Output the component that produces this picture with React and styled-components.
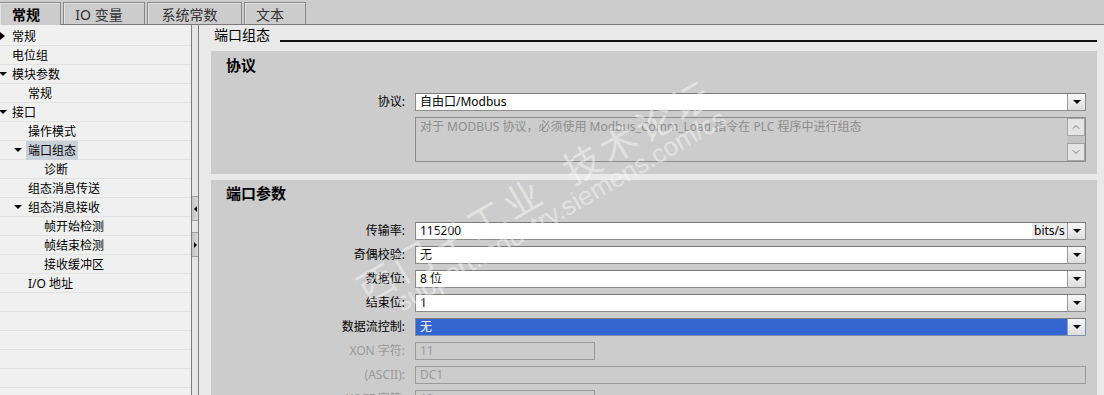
import React from "react";
import styled, { createGlobalStyle } from "styled-components";
import { ChevronUp, ChevronDown } from "lucide-react";

const GlobalStyle = createGlobalStyle`
  html, body { margin: 0; padding: 0; }
  body {
    font-family: "Noto Sans", "Noto Sans CJK SC", sans-serif;
    font-size: 12px;
    color: #000;
    background: #e9e9e9;
  }
`;

const Screen = styled.div`
  position: relative;
  width: 1104px;
  height: 395px;
  overflow: hidden;
  display: flex;
  flex-direction: column;
  background: #e9e9e9;
`;

/* ---------- tabs ---------- */
const TabBar = styled.div`
  height: 25px;
  box-sizing: border-box;
  background: #cccccc;
  border-bottom: 1px solid #7a7a7a;
  display: flex;
  align-items: flex-end;
  gap: 2px;
  flex-shrink: 0;
`;

const Tab = styled.div`
  box-sizing: border-box;
  width: ${(p) => p.$w}px;
  border: 1px solid #8a8a8a;
  border-bottom: none;
  border-left: ${(p) => (p.$first ? "none" : "1px solid #8a8a8a")};
  box-shadow: inset 1px 0 0 #e2e2e2, inset 0 1px 0 #e2e2e2;
  display: flex;
  align-items: center;
  justify-content: center;
  padding-right: ${(p) => (p.$first ? 8 : 10)}px;
  font-size: 14px;
  font-weight: ${(p) => (p.$active ? 700 : 400)};
  color: ${(p) => (p.$active ? "#000" : "#333")};
  margin-bottom: ${(p) => (p.$active ? "-1px" : "0")};
  height: ${(p) => (p.$active ? "23px" : "22px")};
  background: #cccccc;
`;

/* ---------- body ---------- */
const Body = styled.div`
  flex: 1;
  display: flex;
  min-height: 0;
`;

const Sidebar = styled.div`
  width: 191px;
  flex-shrink: 0;
  background: #f0f0f0;
  padding-top: 2px;
  box-sizing: border-box;
`;

const TreeRow = styled.div`
  height: 19px;
  box-sizing: border-box;
  border-bottom: 1px solid #e2e2e2;
  display: flex;
  align-items: center;
  padding-left: ${(p) => (p.$level === 0 ? 0 : p.$level === 1 ? 14 : 30)}px;
  font-size: 12px;
  white-space: nowrap;
`;

const ArrowSlot = styled.div`
  width: ${(p) => (p.$level === 0 ? 12 : 14)}px;
  height: 19px;
  display: flex;
  align-items: center;
  flex-shrink: 0;
`;

const TriRight = styled.span`
  width: 0;
  height: 0;
  border-top: 4px solid transparent;
  border-bottom: 4px solid transparent;
  border-left: 5px solid #000;
`;

const TriDown = styled.span`
  width: 0;
  height: 0;
  border-left: 4px solid transparent;
  border-right: 4px solid transparent;
  border-top: 4px solid #000;
  margin-left: ${(p) => p.$offset || 0}px;
`;

const TreeLabel = styled.span`
  height: 19px;
  line-height: 19px;
  padding: 0 2px;
  margin-left: -2px;
  background: ${(p) => (p.$selected ? "#c8d0da" : "transparent")};
`;

const Splitter = styled.div`
  width: 8px;
  flex-shrink: 0;
  box-sizing: border-box;
  border-left: 1px solid #7c7c7c;
  border-right: 1px solid #7c7c7c;
  background: #e6e6e6;
  display: flex;
  flex-direction: column;
  padding-top: 171px;
  gap: 11px;
`;

const SplitButton = styled.div`
  height: 23px;
  border-top: 1px solid #a0a0a0;
  border-bottom: 1px solid #a0a0a0;
  background: linear-gradient(90deg, #c4c4c4, #dadada);
  display: flex;
  align-items: center;
  justify-content: center;
`;

const SmallTri = styled.span`
  width: 0;
  height: 0;
  border-top: 3px solid transparent;
  border-bottom: 3px solid transparent;
  ${(p) =>
    p.$dir === "left"
      ? "border-right: 3px solid #000;"
      : "border-left: 3px solid #000;"}
`;

const Main = styled.div`
  flex: 1;
  background: #e9e9e9;
  padding: 0 7px 0 12px;
  display: flex;
  flex-direction: column;
  min-height: 0;
`;

const PageHeader = styled.div`
  height: 26px;
  flex-shrink: 0;
  display: flex;
  align-items: flex-start;
  padding: 2px 0 0 3px;
  box-sizing: border-box;
`;

const PageTitle = styled.span`
  font-size: 14px;
  line-height: 16px;
`;

const Rule = styled.div`
  flex: 1;
  height: 13px;
  border-bottom: 2px solid #111;
  margin-left: 10px;
`;

const Section = styled.div`
  flex-shrink: 0;
  background: #cccccc;
  padding: ${(p) => p.$pad};
  margin-bottom: 6px;
`;

const SectionTitle = styled.div`
  font-size: 15px;
  font-weight: 700;
  height: 20px;
  line-height: 20px;
  padding-left: 15px;
`;

const Form = styled.div`
  display: grid;
  grid-template-columns: 194px 1fr;
  column-gap: 10px;
  row-gap: 6px;
  padding-right: 11px;
  margin-top: ${(p) => p.$top}px;
`;

const Label = styled.div`
  text-align: right;
  font-size: 12px;
  line-height: 18px;
  height: 18px;
  color: ${(p) => (p.$disabled ? "#9a9a9a" : "#000")};
  white-space: nowrap;
`;

const Field = styled.div`
  height: 18px;
  box-sizing: border-box;
  width: ${(p) => (p.$short ? "180px" : "auto")};
  border: 1px solid ${(p) => (p.$active ? "#7f8fb0" : p.$disabled ? "#9a9a9a" : "#8c8c8c")};
  border-top-color: ${(p) => (p.$disabled ? "#9a9a9a" : "#7a7a7a")};
  background: ${(p) => (p.$active ? "#3366d0" : p.$disabled ? "transparent" : "#fff")};
  color: ${(p) => (p.$active ? "#fff" : p.$disabled ? "#9a9a9a" : "#000")};
  display: flex;
  align-items: stretch;
`;

const FieldText = styled.div`
  flex: 1;
  padding-left: 4px;
  font-size: 12px;
  line-height: 16px;
  white-space: nowrap;
  overflow: hidden;
`;

const Unit = styled.div`
  width: 35px;
  background: #ececec;
  font-size: 12px;
  line-height: 16px;
  padding-left: 2px;
  box-sizing: border-box;
`;

const DropButton = styled.div`
  width: 17px;
  flex-shrink: 0;
  border-left: 1px solid #9a9a9a;
  background: linear-gradient(#f8f8f8, #dedede);
  display: flex;
  align-items: center;
  justify-content: center;
`;

const DescBox = styled.div`
  grid-column: 2;
  height: 45px;
  box-sizing: border-box;
  border: 1px solid #8c8c8c;
  display: flex;
`;

const DescText = styled.div`
  flex: 1;
  color: #8e8e8e;
  font-size: 12px;
  padding: 1px 0 0 4px;
  line-height: 16px;
`;

const ScrollCol = styled.div`
  width: 18px;
  display: flex;
  flex-direction: column;
  justify-content: space-between;
  background: #c4c4c4;
`;

const ScrollButton = styled.div`
  height: 18px;
  box-sizing: border-box;
  border: 1px solid #a4a4a4;
  background: #e4e4e4;
  display: flex;
  align-items: center;
  justify-content: center;
  color: #7a7a7a;
`;

const Watermark = styled.div`
  position: absolute;
  left: 372px;
  top: 312px;
  transform: rotate(-30deg);
  transform-origin: 0 0;
  pointer-events: none;
  color: rgba(255, 255, 255, 0.45);
  white-space: nowrap;
  font-family: "Noto Sans CJK SC", sans-serif;
`;

const MarkBig = styled.div`
  font-size: 37px;
  letter-spacing: 5px;
  word-spacing: 14px;
  line-height: 42px;
  margin-top: -46px;
`;

const MarkSmall = styled.div`
  font-family: "Liberation Sans", sans-serif;
  font-size: 26px;
  line-height: 28px;
  margin-top: -4px;
  margin-left: 26px;
`;

const tabs = [
  { label: "常规", w: 61, active: true, first: true },
  { label: "IO 变量", w: 82 },
  { label: "系统常数", w: 95 },
  { label: "文本", w: 62 },
];

const tree = [
  { label: "常规", level: 0, arrow: "right" },
  { label: "电位组", level: 0 },
  { label: "模块参数", level: 0, arrow: "down" },
  { label: "常规", level: 1 },
  { label: "接口", level: 0, arrow: "down" },
  { label: "操作模式", level: 1 },
  { label: "端口组态", level: 1, arrow: "down", selected: true },
  { label: "诊断", level: 2 },
  { label: "组态消息传送", level: 1 },
  { label: "组态消息接收", level: 1, arrow: "down" },
  { label: "帧开始检测", level: 2 },
  { label: "帧结束检测", level: 2 },
  { label: "接收缓冲区", level: 2 },
  { label: "I/O 地址", level: 1 },
  { label: "", level: 0 },
  { label: "", level: 0 },
  { label: "", level: 0 },
  { label: "", level: 0 },
  { label: "", level: 0 },
];

const params = [
  { label: "传输率:", value: "115200", unit: "bits/s", drop: true },
  { label: "奇偶校验:", value: "无", drop: true },
  { label: "数据位:", value: "8 位", drop: true },
  { label: "结束位:", value: "1", drop: true },
  { label: "数据流控制:", value: "无", drop: true, active: true },
  { label: "XON 字符:", value: "11", disabled: true, short: true },
  { label: "(ASCII):", value: "DC1", disabled: true },
  { label: "XOFF 字符:", value: "13", disabled: true, short: true },
];

const Drop = () => (
  <DropButton>
    <TriDown />
  </DropButton>
);

const App = () => {
  return (
    <Screen>
      <GlobalStyle />
      <TabBar>
        {tabs.map((t) => (
          <Tab key={t.label} $w={t.w} $active={t.active} $first={t.first}>
            {t.label}
          </Tab>
        ))}
      </TabBar>
      <Body>
        <Sidebar>
          {tree.map((n, i) => (
            <TreeRow key={i} $level={n.level}>
              <ArrowSlot $level={n.level}>
                {n.arrow === "right" && <TriRight />}
                {n.arrow === "down" && <TriDown $offset={n.level === 0 ? -1 : 0} />}
              </ArrowSlot>
              {n.label && <TreeLabel $selected={n.selected}>{n.label}</TreeLabel>}
            </TreeRow>
          ))}
        </Sidebar>
        <Splitter>
          <SplitButton>
            <SmallTri $dir="left" />
          </SplitButton>
          <SplitButton>
            <SmallTri $dir="right" />
          </SplitButton>
        </Splitter>
        <Main>
          <PageHeader>
            <PageTitle>端口组态</PageTitle>
            <Rule />
          </PageHeader>
          <Section $pad="4px 0 12px 0">
            <SectionTitle>协议</SectionTitle>
            <Form $top={18}>
              <Label>协议:</Label>
              <Field>
                <FieldText>自由口/Modbus</FieldText>
                <Drop />
              </Field>
              <DescBox>
                <DescText>
                  对于 MODBUS 协议，必须使用 Modbus_Comm_Load 指令在 PLC 程序中进行组态
                </DescText>
                <ScrollCol>
                  <ScrollButton>
                    <ChevronUp size={12} strokeWidth={2} />
                  </ScrollButton>
                  <ScrollButton>
                    <ChevronDown size={12} strokeWidth={2} />
                  </ScrollButton>
                </ScrollCol>
              </DescBox>
            </Form>
          </Section>
          <Section $pad="3px 0 40px 0">
            <SectionTitle>端口参数</SectionTitle>
            <Form $top={19}>
              {params.map((p) => (
                <React.Fragment key={p.label}>
                  <Label $disabled={p.disabled}>{p.label}</Label>
                  <Field $active={p.active} $disabled={p.disabled} $short={p.short}>
                    <FieldText>{p.value}</FieldText>
                    {p.unit && <Unit>{p.unit}</Unit>}
                    {p.drop && <Drop />}
                  </Field>
                </React.Fragment>
              ))}
            </Form>
          </Section>
        </Main>
      </Body>
      <Watermark>
        <MarkBig>西门子工业 技术论坛</MarkBig>
        <MarkSmall>support.industry.siemens.com/cs</MarkSmall>
      </Watermark>
    </Screen>
  );
};

export default App;
